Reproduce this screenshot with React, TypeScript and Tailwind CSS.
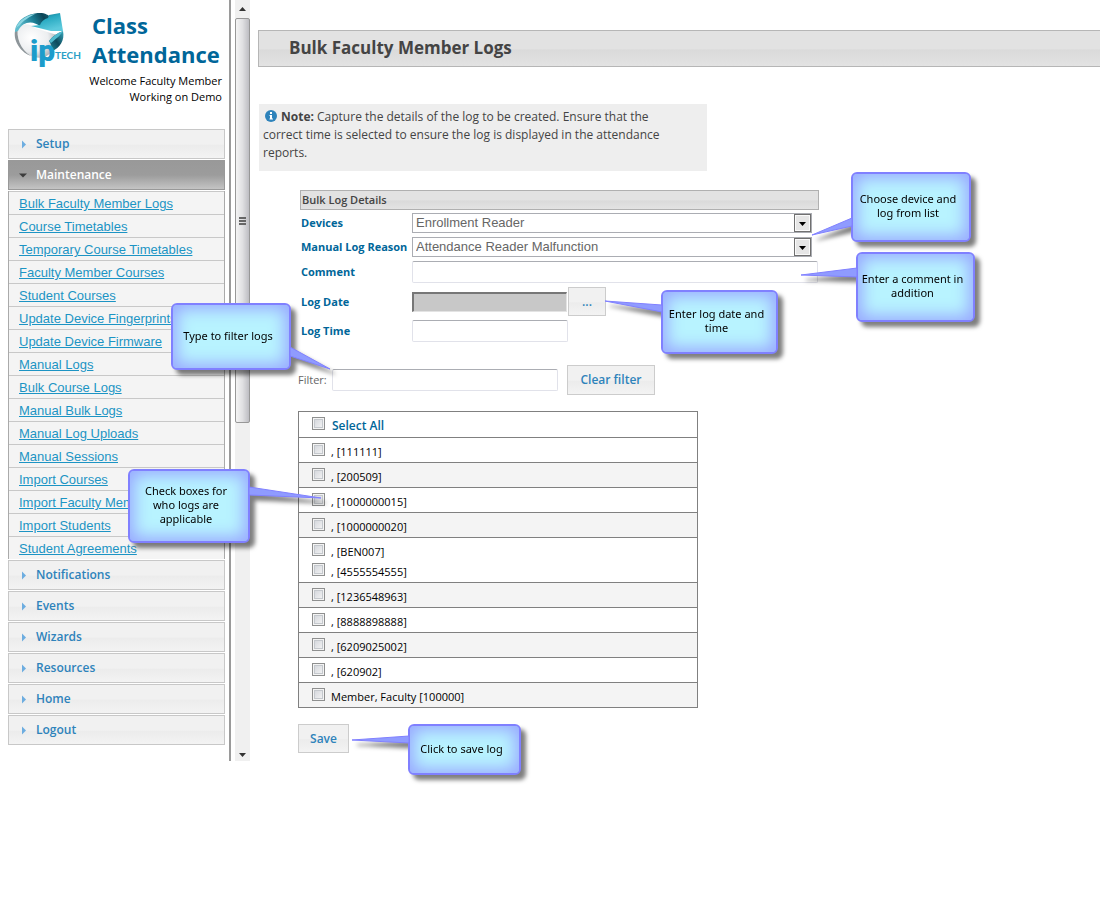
import type { ReactNode } from "react";

const maintenanceLinks = [
  "Bulk Faculty Member Logs",
  "Course Timetables",
  "Temporary Course Timetables",
  "Faculty Member Courses",
  "Student Courses",
  "Update Device Fingerprints",
  "Update Device Firmware",
  "Manual Logs",
  "Bulk Course Logs",
  "Manual Bulk Logs",
  "Manual Log Uploads",
  "Manual Sessions",
  "Import Courses",
  "Import Faculty Members",
  "Import Students",
  "Student Agreements",
];

const sections = ["Notifications", "Events", "Wizards", "Resources", "Home", "Logout"];

const memberRows: string[][] = [
  [", [111111]"],
  [", [200509]"],
  [", [1000000015]"],
  [", [1000000020]"],
  [", [BEN007]", ", [4555554555]"],
  [", [1236548963]"],
  [", [8888898888]"],
  [", [6209025002]"],
  [", [620902]"],
  ["Member, Faculty [100000]"],
];

function Logo() {
  return (
    <svg className="h-[64px] w-[75px] shrink-0" viewBox="0 0 75 64" role="img" aria-label="IP Tech">
      <defs>
        <radialGradient id="ball" cx="0.35" cy="0.4" r="0.7">
          <stop offset="0" stopColor="#ffffff" />
          <stop offset="0.6" stopColor="#eceef0" />
          <stop offset="1" stopColor="#a4acb0" />
        </radialGradient>
        <linearGradient id="band" x1="0" y1="0.3" x2="1" y2="0">
          <stop offset="0" stopColor="#5fbccd" />
          <stop offset="0.45" stopColor="#1c7f96" />
          <stop offset="0.75" stopColor="#0b4456" />
          <stop offset="1" stopColor="#15687c" />
        </linearGradient>
        <linearGradient id="head" x1="0" y1="0" x2="0.5" y2="1">
          <stop offset="0" stopColor="#0f5f74" />
          <stop offset="0.45" stopColor="#27a9c1" />
          <stop offset="1" stopColor="#5cc9dc" />
        </linearGradient>
        <linearGradient id="blade" x1="1" y1="0" x2="0" y2="1">
          <stop offset="0" stopColor="#3aa9be" />
          <stop offset="0.5" stopColor="#0c4a5c" />
          <stop offset="1" stopColor="#23879b" />
        </linearGradient>
      </defs>
      <path d="M5 18C10 12 16 12 22 17L44 24C45 33 40 42 32 46C22 49 12 43 8 35C5 29 4 23 5 18Z" fill="url(#ball)" />
      <path d="M5 16C3 26 7 38 18 45C9 42 0 31 2 20Z" fill="#8d9599" />
      <path d="M2 21C2 11 13 2 27 2C32 2 36 4 38 7L28 16C20 9 10 10 5 20Z" fill="url(#band)" />
      <path d="M3 17C6 9 14 4 22 3C16 6 10 10 7 14Z" fill="#8bd5e1" />
      <path d="M18 15L27 14C28 11 31 8 35 7L36 4L47 2L36 3L47 2L50 20L38 20Z" fill="url(#head)" />
      <path d="M36 30C40 25 44 22 50 20C52 29 47 37 39 40C39 36 38 33 36 30Z" fill="url(#blade)" />
      <path d="M36 30C40 25 44 22 50 20C48 24 44 27 38 32Z" fill="#4fbacd" />
      <text x="17" y="50" fontFamily="Roboto, sans-serif" fontWeight="900" fontSize="30" fill="#1c9ccb">ip</text>
      <text x="42" y="48" fontFamily="Lato, sans-serif" fontWeight="700" fontSize="10" fill="#2c9fc6">TECH</text>
    </svg>
  );
}

function SectionHeader({ label, open = false }: { label: string; open?: boolean }) {
  return (
    <button
      type="button"
      aria-expanded={open}
      className={
        open
          ? "flex h-[30px] w-full items-center border border-[#999] bg-linear-to-b from-[#999] via-[#9c9c9c] to-[#c4c4c4] text-left text-[12px] font-semibold text-white"
          : "flex h-[30px] w-full items-center border border-[#c8c8c8] bg-[linear-gradient(#f1f1f1_50%,#ececec_55%,#f3f3f3)] text-left text-[12px] font-semibold text-[#2e83bb]"
      }
    >
      <svg className="ml-[9px] mr-[9px] h-[9px] w-[9px] shrink-0" viewBox="0 0 9 9" aria-hidden="true">
        {open ? <path d="M1 2.5H9L5 6.5Z" fill="#3c3c3c" /> : <path d="M4 0.5L8 4.5L4 8.5Z" fill="#6dade0" />}
      </svg>
      {label}
    </button>
  );
}

function ScrollBar() {
  return (
    <div className="flex w-[21px] shrink-0 border-l-2 border-[#9a9a9a] pl-1" aria-hidden="true">
      <div className="flex w-[15px] flex-col items-center bg-[#f0f0f0]">
        <svg className="h-[18px] w-[15px] shrink-0" viewBox="0 0 15 18">
          <path d="M4 11H11L7.5 7Z" fill="#333" />
        </svg>
        <div className="flex h-[405px] w-full flex-col items-center justify-center gap-px rounded-[2px] border border-[#979797] bg-linear-to-r from-[#f4f4f4] via-[#e0e0e2] to-[#bdbdc2]">
          <span className="h-[2px] w-[7px] bg-[#666]" />
          <span className="h-[2px] w-[7px] bg-[#666]" />
          <span className="h-[2px] w-[7px] bg-[#666]" />
        </div>
        <svg className="mt-auto h-[14px] w-[15px] shrink-0" viewBox="0 0 15 14">
          <path d="M4 6H11L7.5 10Z" fill="#333" />
        </svg>
      </div>
    </div>
  );
}

function Sidebar() {
  return (
    <aside className="w-[229px] shrink-0 pb-4">
      <header className="h-[129px] pr-[7px] pt-[11px]">
        <div className="flex h-[62px] items-start pl-[13px]">
          <Logo />
          <h1 className="ml-1 text-[22px] font-bold leading-[29px] text-[#006699]">Class Attendance</h1>
        </div>
        <p className="text-right text-[11px] leading-4 text-black">
          Welcome <span className="font-medium">Faculty Member</span>
        </p>
        <p className="text-right text-[11px] leading-4 text-black">
          Working on <span className="font-medium">Demo</span>
        </p>
      </header>
      <nav className="ml-2 mr-1 flex flex-col gap-px">
        <SectionHeader label="Setup" />
        <SectionHeader label="Maintenance" open />
        <ul className="border-x border-[#aaa] bg-[#f4f4f4]">
          {maintenanceLinks.map((l) => (
            <li key={l} className="flex h-[23px] items-center overflow-hidden border-t border-[#c8c8c8] pl-[10px]">
              <a href="#" className="whitespace-nowrap pt-px font-['Liberation_Sans',Arial,sans-serif] text-[13px] leading-[23px] text-[#1c94c4] underline">
                {l}
              </a>
            </li>
          ))}
        </ul>
        {sections.map((s) => (
          <SectionHeader key={s} label={s} />
        ))}
      </nav>
    </aside>
  );
}

const inputClass =
  "h-[22px] rounded-[2px] border border-[#e1e2ea] border-t-[#abadb3] bg-white px-1 font-['Liberation_Sans',Arial,sans-serif] text-[13px] text-[#666] outline-none";
const buttonClass =
  "border border-[#ccc] bg-[linear-gradient(#f1f1f1_50%,#ececec_55%,#f3f3f3)] text-center text-[12px] font-semibold text-[#2e83bb]";
const labelClass = "whitespace-nowrap pl-px text-[11px] font-bold leading-5 text-[#006699]";

function SelectBox({ id, value }: { id: string; value: string }) {
  return (
    <div className="relative w-[400px]">
      <select
        id={id}
        defaultValue={value}
        className="block h-5 w-full appearance-none border border-[#abadb3] bg-white pl-[3px] font-['Liberation_Sans',Arial,sans-serif] text-[13px] leading-[18px] text-[#666] outline-none"
      >
        <option>{value}</option>
      </select>
      <svg className="pointer-events-none absolute right-px top-px h-[18px] w-[17px]" viewBox="0 0 17 18" aria-hidden="true">
        <rect x="0.5" y="0.5" width="16" height="17" fill="#ececec" stroke="#707070" />
        <rect x="1.5" y="1.5" width="14" height="15" fill="#e6e6e6" stroke="#fafafa" />
        <path d="M5 8H12L8.5 12Z" fill="#000" />
      </svg>
    </div>
  );
}

function Check({ label, strong = false }: { label: string; strong?: boolean }) {
  return (
    <label
      className={
        strong
          ? "flex h-[25px] items-start pl-[13px] text-[12px] font-semibold leading-[27px] text-[#006699]"
          : "flex h-5 items-start pl-[13px] text-[11px] leading-5 text-black"
      }
    >
      <input
        type="checkbox"
        className={
          strong
            ? "mr-[7px] mt-[5px] h-[13px] w-[13px] shrink-0 appearance-none border border-[#8e8f8f] bg-linear-to-br from-[#cfd2d8] to-[#f8f8f8] shadow-[inset_0_0_0_1px_#f4f4f4,inset_0_0_0_2px_#c4c8cd] checked:from-[#2e83bb] checked:to-[#2e83bb]"
            : "mr-[6px] mt-px h-[13px] w-[13px] shrink-0 appearance-none border border-[#8e8f8f] bg-linear-to-br from-[#cfd2d8] to-[#f8f8f8] shadow-[inset_0_0_0_1px_#f4f4f4,inset_0_0_0_2px_#c4c8cd] checked:from-[#2e83bb] checked:to-[#2e83bb]"
        }
      />
      {label}
    </label>
  );
}

function Callout({ box, tail, points, children }: { box: string; tail: string; points: string; children: ReactNode }) {
  return (
    <div className={`absolute drop-shadow-[5px_5px_2px_rgba(0,0,0,0.5)] ${box}`}>
      <div className="flex h-full w-full items-center justify-center whitespace-nowrap rounded-[6px] border-2 border-[#8080ff] bg-[#b8f3ff] pb-[2px] pr-[6px] text-center font-['Noto_Sans','Open_Sans',sans-serif] text-[11px] leading-[14px] text-black shadow-[inset_0_0_16px_4px_#98a8ff]">
        {children}
      </div>
      <svg className={`absolute overflow-visible ${tail}`} aria-hidden="true">
        <polygon points={points} fill="#8f9bff" stroke="#8080ff" strokeWidth="1" />
      </svg>
    </div>
  );
}

export default function App() {
  return (
    <div className="relative flex min-h-screen items-start bg-white font-['Open_Sans','Trebuchet_MS',sans-serif]">
      <div className="flex shrink-0">
        <Sidebar />
        <ScrollBar />
      </div>

      <main className="min-w-0 flex-1 pl-2 pt-[30px]">
        <h2 className="h-[37px] border border-r-0 border-[#b6b6b6] bg-[linear-gradient(#e2e2e2_50%,#dadada_55%,#e3e3e3)] pl-[30px] text-[17px] font-bold leading-[34px] text-[#444]">
          Bulk Faculty Member Logs
        </h2>

        <p className="ml-px mt-[37px] h-[67px] w-[448px] bg-[#eee] pl-1 pr-10 pt-[4px] text-[12px] leading-[18px] text-[#444]">
          <svg className="mr-1 inline-block h-3 w-[14px] align-[-1px]" viewBox="0 0 14 12" aria-hidden="true">
            <circle cx="8" cy="6" r="6" fill="#2e83bb" />
            <path d="M7 2H9V4H7ZM6.500 5H9V8.500H10V9.500H6.500V8.500H7V6H6.500Z" fill="#fff" />
          </svg>
          <b className="font-bold">Note:</b> Capture the details of the log to be created. Ensure that the correct time is selected to
          ensure the log is displayed in the attendance reports.
        </p>

        <form className="pl-10" onSubmit={(e) => e.preventDefault()}>
          <fieldset className="ml-[2px] mt-[19px]">
            <legend className="mb-[3px] h-5 w-[519px] border border-[#b0b0b0] bg-[linear-gradient(#e2e2e2_50%,#dadada_55%,#e3e3e3)] pl-px text-[11px] font-semibold leading-[18px] text-[#444]">
              Bulk Log Details
            </legend>
            <div className="grid grid-cols-[112px_1fr] items-center gap-y-1">
              <label htmlFor="devices" className={labelClass}>Devices</label>
              <SelectBox id="devices" value="Enrollment Reader" />
              <label htmlFor="reason" className={labelClass}>Manual Log Reason</label>
              <SelectBox id="reason" value="Attendance Reader Malfunction" />
              <label htmlFor="comment" className={labelClass}>Comment</label>
              <input id="comment" type="text" className={`w-[406px] ${inputClass}`} />
              <label htmlFor="date" className={labelClass}>Log Date</label>
              <div className="flex items-center gap-px">
                <input
                  id="date"
                  type="text"
                  readOnly
                  className="h-5 w-[155px] border-b border-l-2 border-r border-t-2 border-b-[#e3e3e3] border-l-[#777] border-r-[#e3e3e3] border-t-[#777] bg-[#c8c8c8] outline-none"
                />
                <button type="button" aria-label="Pick date" className={`h-[29px] w-[38px] ${buttonClass}`}>
                  ...
                </button>
              </div>
              <label htmlFor="time" className={labelClass}>Log Time</label>
              <input id="time" type="text" className={`w-[156px] ${inputClass}`} />
            </div>
          </fieldset>

          <div className="mt-[23px] flex items-center">
            <label htmlFor="filter" className="w-[34px] text-[11px] text-[#666]">Filter:</label>
            <input id="filter" type="text" className={`w-[226px] ${inputClass}`} />
            <button type="button" className={`ml-[9px] h-[30px] w-[88px] ${buttonClass}`}>
              Clear filter
            </button>
          </div>

          <table className="mt-4 w-[400px] border-separate border-spacing-0 border border-[#808080]">
            <thead>
              <tr>
                <th className="p-0 text-left">
                  <Check label="Select All" strong />
                </th>
              </tr>
            </thead>
            <tbody>
              {memberRows.map((row) => (
                <tr key={row[0]} className="even:bg-[#f4f4f4]">
                  <td className="border-t border-[#808080] p-0 pt-1">
                    {row.map((m) => (
                      <Check key={m} label={m} />
                    ))}
                  </td>
                </tr>
              ))}
            </tbody>
          </table>

          <button type="submit" className={`mt-4 h-[29px] w-[51px] ${buttonClass}`}>
            Save
          </button>
        </form>
      </main>

      <Callout box="left-[851px] top-[172px] h-[70px] w-[120px]" tail="left-0 top-0 h-px w-px" points="1,46 -39,63 1,54">
        Choose device and
        <br />
        log from list
      </Callout>
      <Callout box="left-[856px] top-[252px] h-[70px] w-[119px]" tail="left-0 top-0 h-px w-px" points="1,16 -55,23 1,25">
        Enter a comment in
        <br />
        addition
      </Callout>
      <Callout box="left-[661px] top-[290px] h-[64px] w-[117px]" tail="left-0 top-0 h-px w-px" points="1,15 -56,11 1,22">
        Enter log date and
        <br />
        time
      </Callout>
      <Callout box="left-[171px] top-[303px] h-[67px] w-[120px]" tail="right-0 top-0 h-px w-px" points="0,44 40,66 0,53">
        Type to filter logs
      </Callout>
      <Callout box="left-[128px] top-[469px] h-[74px] w-[122px]" tail="right-0 top-0 h-px w-px" points="0,18 72,29 0,26">
        Check boxes for
        <br />
        who logs are
        <br />
        applicable
      </Callout>
      <Callout box="left-[408px] top-[724px] h-[51px] w-[113px]" tail="left-0 top-0 h-px w-px" points="1,12 -56,16 1,19">
        Click to save log
      </Callout>
    </div>
  );
}
